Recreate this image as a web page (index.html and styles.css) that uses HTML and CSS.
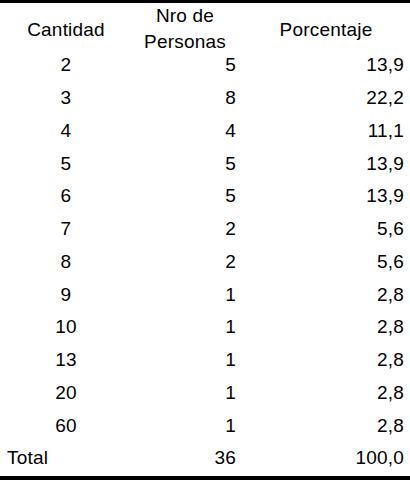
FILE: index.html
```html
<!DOCTYPE html>
<html>
<head>
<meta charset="utf-8">
<link rel="stylesheet" href="styles.css">
</head>
<body>
<div class="tbl">
  <div class="row head">
    <div class="c1">Cantidad</div>
    <div class="c2 hc two">Nro de<br>Personas</div>
    <div class="c3 hc">Porcentaje</div>
  </div>
  <div class="row"><div class="c1">2</div><div class="c2">5</div><div class="c3">13,9</div></div>
  <div class="row"><div class="c1">3</div><div class="c2">8</div><div class="c3">22,2</div></div>
  <div class="row"><div class="c1">4</div><div class="c2">4</div><div class="c3">11,1</div></div>
  <div class="row"><div class="c1">5</div><div class="c2">5</div><div class="c3">13,9</div></div>
  <div class="row"><div class="c1">6</div><div class="c2">5</div><div class="c3">13,9</div></div>
  <div class="row"><div class="c1">7</div><div class="c2">2</div><div class="c3">5,6</div></div>
  <div class="row"><div class="c1">8</div><div class="c2">2</div><div class="c3">5,6</div></div>
  <div class="row"><div class="c1">9</div><div class="c2">1</div><div class="c3">2,8</div></div>
  <div class="row"><div class="c1">10</div><div class="c2">1</div><div class="c3">2,8</div></div>
  <div class="row"><div class="c1">13</div><div class="c2">1</div><div class="c3">2,8</div></div>
  <div class="row"><div class="c1">20</div><div class="c2">1</div><div class="c3">2,8</div></div>
  <div class="row"><div class="c1">60</div><div class="c2">1</div><div class="c3">2,8</div></div>
  <div class="row total"><div class="c1">Total</div><div class="c2">36</div><div class="c3">100,0</div></div>
</div>
</body>
</html>
```
FILE: styles.css
```css
html, body {
  margin: 0;
  padding: 0;
  background: #fff;
}
body {
  font-family: "Liberation Sans", Arial, sans-serif;
  font-size: 19px;
  letter-spacing: 0.2px;
  color: #000;
}
.tbl {
  width: 410px;
  height: 480px;
  box-sizing: border-box;
  border-top: 3px solid #000;
  border-bottom: 4px solid #000;
}
.row {
  display: grid;
  grid-template-columns: 130px 110px 170px;
  height: 32.75px;
  align-items: center;
  line-height: 20px;
}
.head {
  height: 46px;
  line-height: 26px;
}
.head > div {
  padding-bottom: 6px;
}
.head > .two {
  padding-bottom: 8px;
}
.c1 {
  text-align: center;
  padding-left: 2px;
}
.c2 {
  text-align: right;
  padding-right: 4px;
}
.c3 {
  text-align: right;
  padding-right: 6px;
}
.hc {
  text-align: center;
  padding-right: 0;
}
.head .c3 {
  padding-left: 2px;
}
.total .c1 {
  text-align: left;
  padding-left: 7px;
}
```
